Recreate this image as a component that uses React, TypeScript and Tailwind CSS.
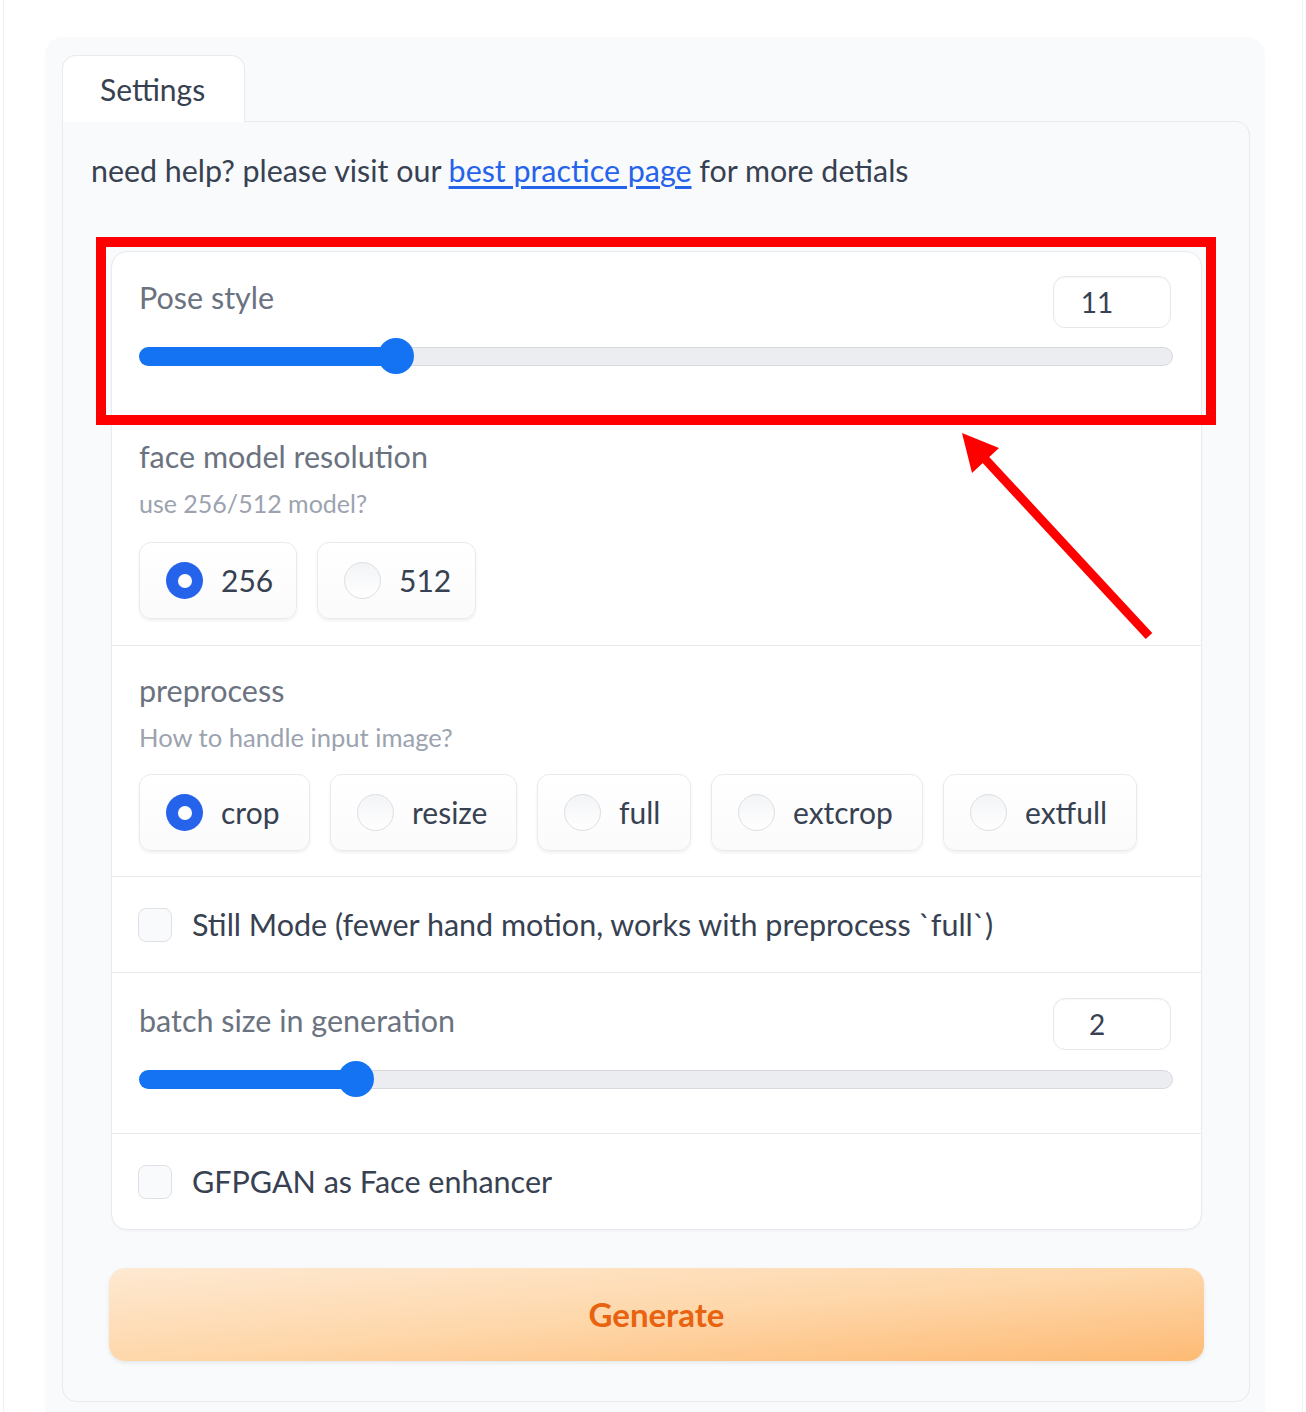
import React from 'react';

const font = "font-['Lato','Liberation_Sans',sans-serif]";

const NumberBox = ({ value }: { value: string }) => (
  <div className="flex h-[52px] w-[118px] items-center justify-center rounded-[12px] border border-[#e5e7eb] bg-white pr-[30px] text-[28px] text-[#374151] shadow-[inset_0_1px_2px_rgba(0,0,0,0.04)]">
    {value}
  </div>
);

const Slider = ({ pct }: { pct: number }) => (
  <div className="relative flex h-[36px] w-[1034px] items-center">
    <div className="h-[19px] w-full rounded-full border border-[#d6d9de] bg-[#ebedf0]" />
    <div className="absolute left-0 h-[19px] rounded-full bg-[#1473f2]" style={{ width: `${pct}%` }} />
    <div
      className="absolute h-[36px] w-[36px] -translate-x-1/2 rounded-full bg-[#1473f2]"
      style={{ left: `${pct}%` }}
    />
  </div>
);

const Radio = ({ label, checked, width }: { label: string; checked?: boolean; width: string }) => (
  <div
    className={`flex h-[77px] items-center gap-[18px] rounded-[12px] border border-[#e8eaed] bg-gradient-to-b from-white to-[#fbfbfc] pl-[26px] shadow-[0_2px_3px_rgba(0,0,0,0.06)] ${width}`}
  >
    {checked ? (
      <div className="flex h-[37px] w-[37px] items-center justify-center rounded-full bg-[#2563eb]">
        <div className="h-[14px] w-[14px] rounded-full bg-white" />
      </div>
    ) : (
      <div className="h-[37px] w-[37px] rounded-full border border-[#dcdfe3] bg-gradient-to-b from-[#f3f4f6] to-white" />
    )}
    <span className="text-[30px] text-[#374151]">{label}</span>
  </div>
);

const Checkbox = ({ label }: { label: string }) => (
  <div className="flex h-[96px] items-center gap-[20px] border-t border-[#e8eaed] pl-[26px]">
    <div className="h-[34px] w-[34px] rounded-[8px] border border-[#dfe1e5] bg-[#f9fafb]" />
    <span className="text-[30.5px] text-[#374151]">{label}</span>
  </div>
);

export default function App() {
  return (
    <div className={`relative h-[1412px] w-[1306px] overflow-hidden bg-white ${font}`}>
      <div className="mx-[3px] h-full border-x border-[#f0f1f3] pt-[37px]">
        <div className="ml-[41px] h-full w-[1220px] rounded-t-[18px] bg-[#f9fafb] pl-[17px] pr-[15px] pt-[18px]">
          {/* tab */}
          <div className="relative z-10 -mb-px flex h-[67px] w-[183px] items-center rounded-t-[14px] border border-b-0 border-[#e8eaed] bg-white pl-[37px] text-[30px] text-[#374151]">
            Settings
          </div>
          <div className="h-[1281px] rounded-b-[14px] rounded-tr-[14px] border border-[#e8eaed] bg-[#f9fafb] pl-[28px] pr-[47px] pt-[28px]">
            <p className="h-[40px] text-[30.4px] leading-[40px] text-[#374151]">
              need help? please visit our{' '}
              <a className="text-[#2563eb] underline underline-offset-[4px]">best practice page</a> for more detials
            </p>

            <div className="ml-[20px] mt-[61px] overflow-hidden rounded-[16px] border border-[#e8eaed] bg-white shadow-[0_1px_2px_rgba(0,0,0,0.04)]">
              {/* Pose style */}
              <div className="h-[172px] pl-[27px] pr-[30px] pt-[24px]">
                <div className="flex items-start justify-between">
                  <span className="mt-[5px] h-[32px] text-[30.5px] leading-[32px] text-[#6b7280]">Pose style</span>
                  <NumberBox value="11" />
                </div>
                <div className="mt-[10px]">
                  <Slider pct={24.9} />
                </div>
              </div>

              {/* face model resolution */}
              <div className="h-[221px] border-t border-[#e8eaed] pl-[27px] pt-[15px]">
                <div className="h-[32px] text-[30.5px] leading-[32px] text-[#6b7280]">face model resolution</div>
                <div className="mt-[16px] h-[30px] text-[25px] leading-[30px] text-[#9ca3af]">use 256/512 model?</div>
                <div className="mt-[24px] flex gap-[20px]">
                  <Radio label="256" checked width="w-[158px]" />
                  <Radio label="512" width="w-[159px]" />
                </div>
              </div>

              {/* preprocess */}
              <div className="h-[231px] border-t border-[#e8eaed] pl-[27px] pt-[28px]">
                <div className="h-[32px] text-[30.5px] leading-[32px] text-[#6b7280]">preprocess</div>
                <div className="mt-[16px] h-[30px] text-[25.6px] leading-[30px] text-[#9ca3af]">How to handle input image?</div>
                <div className="mt-[22px] flex gap-[20px]">
                  <Radio label="crop" checked width="w-[171px]" />
                  <Radio label="resize" width="w-[187px]" />
                  <Radio label="full" width="w-[154px]" />
                  <Radio label="extcrop" width="w-[212px]" />
                  <Radio label="extfull" width="w-[194px]" />
                </div>
              </div>

              <Checkbox label="Still Mode (fewer hand motion, works with preprocess `full`)" />

              {/* batch size */}
              <div className="h-[161px] border-t border-[#e8eaed] pl-[27px] pr-[30px] pt-[25px]">
                <div className="flex items-start justify-between">
                  <span className="mt-[6px] h-[32px] text-[30.5px] leading-[32px] text-[#6b7280]">batch size in generation</span>
                  <NumberBox value="2" />
                </div>
                <div className="mt-[11px]">
                  <Slider pct={21} />
                </div>
              </div>

              <Checkbox label="GFPGAN as Face enhancer" />
            </div>

            <button className="ml-[18px] mt-[38px] flex h-[93px] w-[1095px] items-center justify-center rounded-[16px] bg-gradient-to-br from-[#fee9d2] via-[#fed7aa] to-[#fdba74] text-[33px] font-bold text-[#e8620f] shadow-[0_2px_4px_rgba(0,0,0,0.08)]">
              Generate
            </button>
          </div>
        </div>
      </div>

      {/* annotation overlay */}
      <div className="pointer-events-none absolute left-[96px] top-[237px] h-[188px] w-[1120px] border-[10px] border-[#ff0000]" />
      <svg className="pointer-events-none absolute left-0 top-0" width="1306" height="1412">
        <line x1="1149" y1="636" x2="985" y2="459" stroke="#ff0000" strokeWidth="9" />
        <polygon points="962,433 999,448 972,473" fill="#ff0000" />
      </svg>
    </div>
  );
}
